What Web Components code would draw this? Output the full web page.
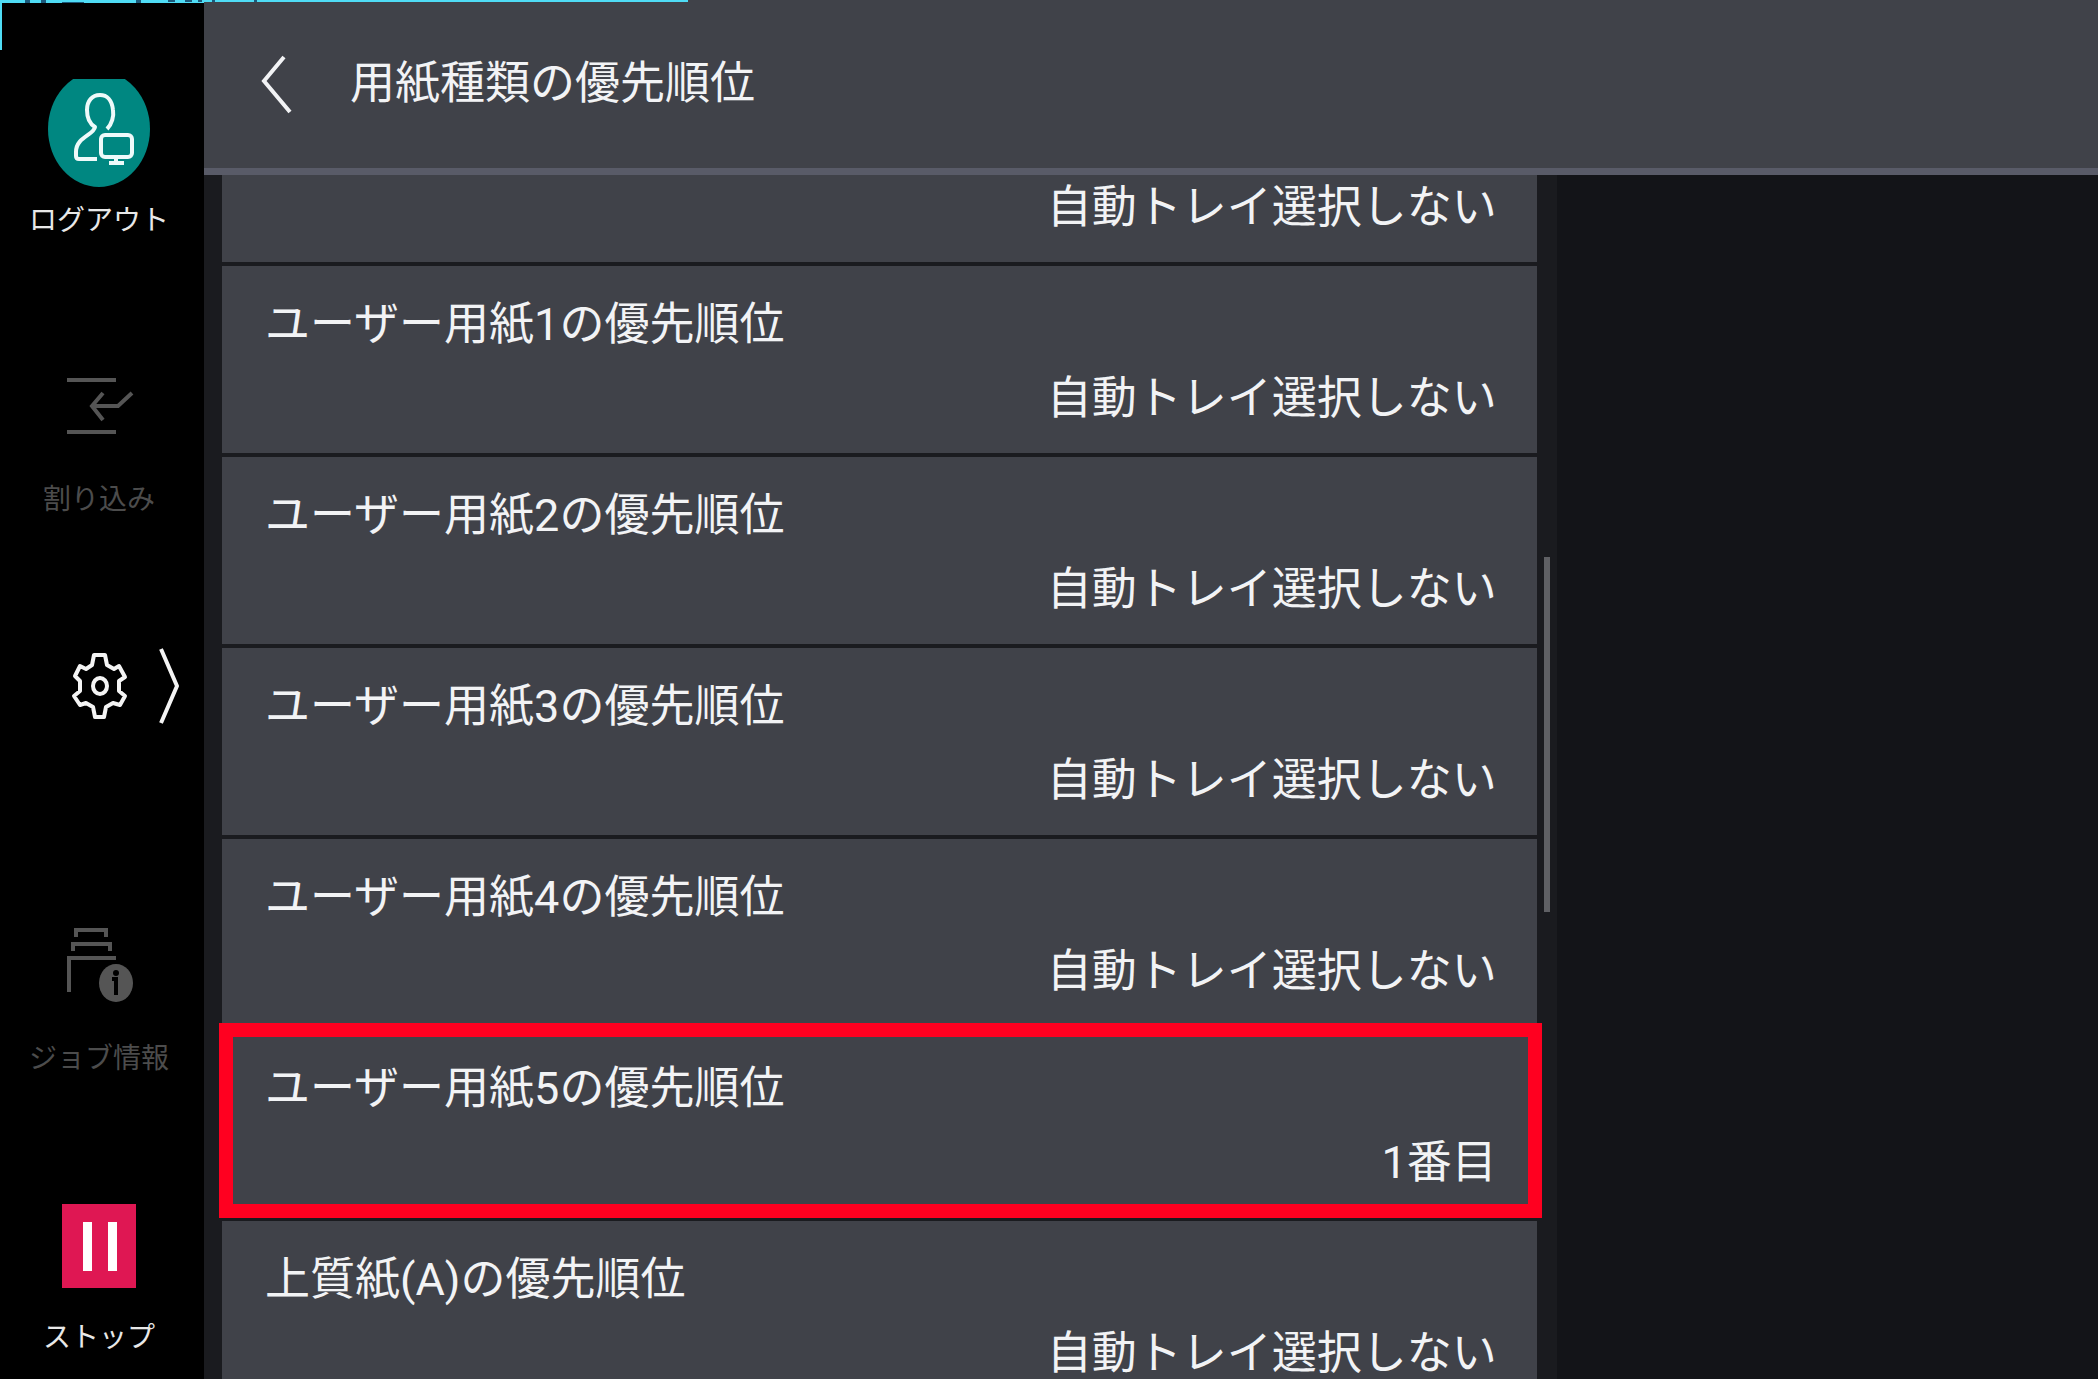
<!DOCTYPE html>
<html lang="ja">
<head>
<meta charset="UTF-8">
<title>用紙種類の優先順位</title>
<style>
  body {
    margin: 0;
    background: #131418;
    color: #f2f3f5;
    font-family: Roboto, "Noto Sans CJK JP", sans-serif;
  }
</style>
</head>
<body>
<printer-panel>
  <side-bar slot="side">
    <side-button label="ログアウト" icon="logout"></side-button>
    <side-button label="割り込み" icon="interrupt" dim></side-button>
    <side-button icon="settings"></side-button>
    <side-button label="ジョブ情報" icon="job" dim></side-button>
    <side-button label="ストップ" icon="stop"></side-button>
  </side-bar>
  <panel-header slot="header">用紙種類の優先順位</panel-header>
  <setting-list slot="list">
    <setting-row partial value="自動トレイ選択しない"></setting-row>
    <setting-row label="ユーザー用紙1の優先順位" value="自動トレイ選択しない"></setting-row>
    <setting-row label="ユーザー用紙2の優先順位" value="自動トレイ選択しない"></setting-row>
    <setting-row label="ユーザー用紙3の優先順位" value="自動トレイ選択しない"></setting-row>
    <setting-row label="ユーザー用紙4の優先順位" value="自動トレイ選択しない"></setting-row>
    <setting-row label="ユーザー用紙5の優先順位" value="1番目" marked></setting-row>
    <setting-row label="上質紙(A)の優先順位" value="自動トレイ選択しない"></setting-row>
  </setting-list>
</printer-panel>

<script>
  class PrinterPanel extends HTMLElement {
    constructor() {
      super();
      this.attachShadow({ mode: 'open' });
      this.shadowRoot.innerHTML = `
        <style>
          :host {
            display: flex;
            position: relative;
            height: 100vh;
            overflow: hidden;
          }
          main {
            display: flex;
            flex-direction: column;
            flex: 1;
            min-width: 0;
          }
          .body {
            display: flex;
            flex: 1;
            min-height: 0;
          }
          ::slotted(setting-list) {
            flex: 5;
          }
          .empty {
            flex: 2;
          }
          .edge {
            position: absolute;
            top: 0;
            left: 0;
            width: 688px;
            height: 50px;
            pointer-events: none;
          }
        </style>
        <slot name="side"></slot>
        <main>
          <slot name="header"></slot>
          <div class="body">
            <slot name="list"></slot>
            <div class="empty"></div>
          </div>
        </main>
        <svg class="edge" viewBox="0 0 688 50" aria-hidden="true">
          <path d="M0 0H688V2H204V3H2V50H0Z" fill="#4fdcf5"/>
          <path d="M25 0h5v3h-5zM41 0h5v3h-5zM62 2h22v1h-22zM136 0h5v3h-5zM168 0h7v2h-7zM185 0h7v2h-7zM198 0h4v2h-4zM212 0h3v2h-3zM254 0h3v2h-3z" fill="#1b5a7c"/>
        </svg>
      `;
    }
  }

  class SideBar extends HTMLElement {
    constructor() {
      super();
      this.attachShadow({ mode: 'open' });
      this.shadowRoot.innerHTML = `
        <style>
          :host {
            display: block;
            width: 204px;
            flex: none;
            background: #000;
          }
          nav {
            display: flex;
            flex-direction: column;
            box-sizing: border-box;
            height: 100%;
            padding: 79px 0 22px;
          }
          ::slotted(*) {
            flex: 1;
          }
          ::slotted(:first-child) {
            flex: none;
          }
        </style>
        <nav><slot></slot></nav>
      `;
    }
  }

  // every icon sits in the same 204x109 box
  const icons = {
    logout: `
      <ellipse cx="99" cy="50" rx="51" ry="58" fill="#008781"/>
      <g fill="none" stroke="#eefafa" stroke-width="4" stroke-linejoin="round">
        <path d="M107 50C112 45 114 37 113 31C112 21 107 16 100 16C92 16 87 22 87 31C87 39 90 45 95 48C94 56 76 58 76 73V77Q76 80 79 80H97"/>
        <rect x="101" y="56" width="31" height="22" rx="4"/>
        <path d="M116 78V85M109 84H124"/>
      </g>`,
    interrupt: `
      <g fill="none" stroke="#555" stroke-width="4">
        <path d="M67 22H116M67 74H116"/>
        <path d="M103 35L92 48L103 62M93 48H118L132 35"/>
      </g>`,
    settings: `
      <g fill="none" stroke="#f4f4f4" stroke-width="4" stroke-linejoin="round">
        <path d="M94 17H105L107 27L114 31L119 28L125 39L119 43V53L125 58L120 67L113 65L106 69L104 79H95L93 69L86 65L80 67L74 58L80 53V43L75 38L80 28L86 31L92 27Z"/>
        <ellipse cx="100" cy="48" rx="7" ry="8"/>
        <path d="M161 11L177 48L161 85"/>
      </g>`,
    job: `
      <g fill="none" stroke="#555" stroke-width="4">
        <path d="M76 20V13H106V20M73 34V27H110V34M69 75V41H116"/>
      </g>
      <ellipse cx="116" cy="66" rx="17" ry="19" fill="#555"/>
      <circle cx="116" cy="56" r="3" fill="#000"/>
      <path d="M112 62H116V78" fill="none" stroke="#000" stroke-width="4"/>`,
    stop: `
      <rect x="62" y="8" width="74" height="84" fill="#df1753"/>
      <path d="M83 26h9v49h-9zM108 26h9v49h-9z" fill="#fff"/>`
  };

  class SideButton extends HTMLElement {
    constructor() {
      super();
      this.attachShadow({ mode: 'open' });
    }

    connectedCallback() {
      const label = this.getAttribute('label') || '';
      this.shadowRoot.innerHTML = `
        <style>
          :host {
            display: flex;
            flex-direction: column;
            justify-content: flex-end;
          }
          button {
            display: flex;
            flex-direction: column;
            align-items: center;
            gap: 13px;
            padding: 0 6px 0 0;
            border: none;
            background: none;
            color: #e8e8e8;
            font: inherit;
            font-size: 28px;
            line-height: 39px;
            cursor: pointer;
          }
          :host([dim]) button {
            color: #4c4c4c;
          }
          svg {
            width: 204px;
            height: 109px;
            margin-right: -6px;
          }
          span {
            min-height: 39px;
            white-space: nowrap;
          }
        </style>
        <button type="button" aria-label="${label || '設定'}">
          <svg viewBox="0 0 204 109" aria-hidden="true">${icons[this.getAttribute('icon')]}</svg>
          <span>${label}</span>
        </button>
      `;
    }
  }

  class PanelHeader extends HTMLElement {
    constructor() {
      super();
      this.attachShadow({ mode: 'open' });
      this.shadowRoot.innerHTML = `
        <style>
          :host {
            display: block;
            background: #404249;
            border-bottom: 7px solid #595b68;
          }
          header {
            display: flex;
            align-items: center;
            gap: 56px;
            height: 168px;
            padding-left: 56px;
          }
          button {
            display: flex;
            padding: 0;
            border: none;
            background: none;
            cursor: pointer;
          }
          svg {
            width: 34px;
            height: 60px;
          }
          h1 {
            margin: 0;
            font-size: 45px;
            font-weight: 400;
            line-height: 74px;
          }
        </style>
        <header>
          <button type="button" aria-label="戻る">
            <svg viewBox="0 0 34 60" aria-hidden="true">
              <path d="M24 3L4 27L30 58" fill="none" stroke="#f2f3f5" stroke-width="4"/>
            </svg>
          </button>
          <h1><slot></slot></h1>
        </header>
      `;
    }
  }

  class SettingList extends HTMLElement {
    constructor() {
      super();
      this.attachShadow({ mode: 'open' });
      this.shadowRoot.innerHTML = `
        <style>
          :host {
            display: block;
            position: relative;
            min-width: 0;
            overflow: hidden;
            background: #1a1b1f;
          }
          .rows {
            display: flex;
            flex-direction: column;
            gap: 4px;
            padding: 0 20px 0 18px;
          }
          .thumb {
            position: absolute;
            top: 382px;
            right: 7px;
            width: 6px;
            height: 355px;
            background: #5f6064;
          }
        </style>
        <div class="rows"><slot></slot></div>
        <div class="thumb"></div>
      `;
    }
  }

  class SettingRow extends HTMLElement {
    constructor() {
      super();
      this.attachShadow({ mode: 'open' });
    }

    connectedCallback() {
      const label = this.getAttribute('label');
      this.shadowRoot.innerHTML = `
        <style>
          :host {
            display: block;
            position: relative;
          }
          button {
            display: flex;
            flex-direction: column;
            box-sizing: border-box;
            width: 100%;
            padding: 22px 40px 17px 43px;
            border: none;
            background: #404249;
            color: inherit;
            font: inherit;
            font-size: 45px;
            line-height: 74px;
            text-align: left;
            cursor: pointer;
          }
          .value {
            align-self: flex-end;
          }
          /* first row is scrolled halfway under the header */
          :host([partial]) {
            margin-top: -4px;
          }
          :host([partial]) button {
            padding-top: 0;
          }
          :host([marked])::after {
            content: "";
            position: absolute;
            inset: -7px -5px -1px -3px;
            border: 14px solid #ff0020;
            pointer-events: none;
          }
        </style>
        <button type="button">
          ${label ? `<span class="label">${label}</span>` : ''}
          <span class="value">${this.getAttribute('value')}</span>
        </button>
      `;
    }
  }

  customElements.define('printer-panel', PrinterPanel);
  customElements.define('side-bar', SideBar);
  customElements.define('side-button', SideButton);
  customElements.define('panel-header', PanelHeader);
  customElements.define('setting-list', SettingList);
  customElements.define('setting-row', SettingRow);
</script>
</body>
</html>
